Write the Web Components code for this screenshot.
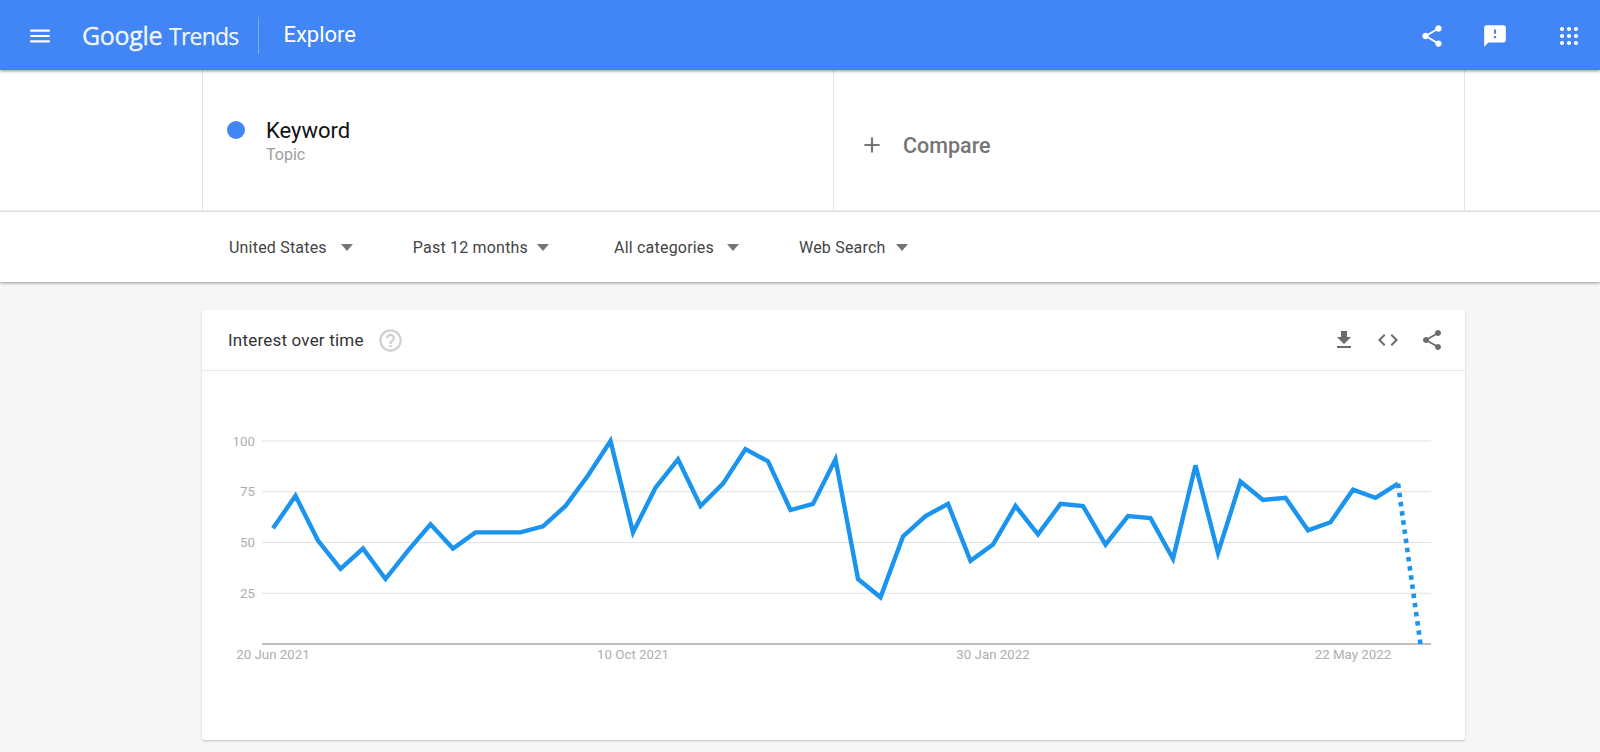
<!DOCTYPE html>
<html>
<head>
<meta charset="utf-8">
<title>Google Trends</title>
<style>
  html, body { margin: 0; height: 100%; }
  body {
    background-color: #f6f6f6;
    font-family: Roboto, "Liberation Sans", sans-serif;
    overflow: hidden;
  }
</style>
</head>
<body>
<trends-header></trends-header>
<search-row></search-row>
<filter-bar></filter-bar>
<chart-card></chart-card>

<script>
const ICONS = {
  menu: 'M3 18h18v-2H3v2zm0-5h18v-2H3v2zm0-7v2h18V6H3z',
  share: 'M18 16.08c-.76 0-1.44.3-1.96.77L8.91 12.7c.05-.23.09-.46.09-.7s-.04-.47-.09-.7l7.05-4.11c.54.5 1.25.81 2.04.81 1.66 0 3-1.34 3-3s-1.34-3-3-3-3 1.34-3 3c0 .24.04.47.09.7L8.04 9.81C7.5 9.31 6.79 9 6 9c-1.66 0-3 1.34-3 3s1.34 3 3 3c.79 0 1.5-.31 2.04-.81l7.12 4.16c-.05.21-.08.43-.08.65 0 1.61 1.31 2.92 2.92 2.92 1.61 0 2.92-1.31 2.92-2.92s-1.31-2.92-2.92-2.92z',
  feedback: 'M20 2H4c-1.1 0-1.99.9-1.99 2L2 22l4-4h14c1.1 0 2-.9 2-2V4c0-1.1-.9-2-2-2zm-7 12h-2v-2h2v2zm0-4h-2V6h2v4z',
  download: 'M19 9h-4V3H9v6H5l7 7 7-7zM5 18v2h14v-2H5z',
  code: 'M9.4 16.6L4.8 12l4.6-4.6L8 6l-6 6 6 6 1.4-1.4zm5.2 0l4.6-4.6-4.6-4.6L16 6l6 6-6 6-1.4-1.4z',
  help: 'M11 18h2v-2h-2v2zm1-16C6.48 2 2 6.48 2 12s4.48 10 10 10 10-4.48 10-10S17.52 2 12 2zm0 18c-4.41 0-8-3.59-8-8s3.59-8 8-8 8 3.59 8 8-3.59 8-8 8zm0-14c-2.21 0-4 1.79-4 4h2c0-1.1.9-2 2-2s2 .9 2 2c0 2-3 1.75-3 5h2c0-2.25 3-2.5 3-5 0-2.21-1.79-4-4-4z',
  plus: 'M19 13h-6v6h-2v-6H5v-2h6V5h2v6h6v2z'
}

class MatIcon extends HTMLElement {
  connectedCallback () {
    const size = this.getAttribute('size') || 24
    const shadow = this.attachShadow({ mode: 'open' })
    shadow.innerHTML = `
      <style>
        :host { display: block; width: ${size}px; height: ${size}px; color: inherit; }
        svg { display: block; width: 100%; height: 100%; fill: currentColor; }
      </style>
      <svg viewBox="0 0 24 24"><path d="${ICONS[this.getAttribute('name')]}"/></svg>`
  }
}

class TrendsHeader extends HTMLElement {
  connectedCallback () {
    const dots = []
    for (const x of [5, 12, 19]) for (const y of [5, 12, 19]) dots.push(`<circle cx="${x}" cy="${y}" r="2.1"/>`)
    this.attachShadow({ mode: 'open' }).innerHTML = `
      <style>
        :host {
          display: flex;
          align-items: center;
          position: relative;
          z-index: 3;
          height: 70px;
          padding: 0 19px 0 27px;
          background-color: #4285f4;
          color: #fff;
          box-shadow: 0 1px 3px rgba(0, 0, 0, .45);
        }
        mat-icon[name="menu"] { margin-top: 2px; }
        .logo {
          display: flex;
          align-items: baseline;
          gap: 7px;
          margin-left: 29px;
          font-family: "Open Sans", sans-serif;
          color: rgba(255, 255, 255, .92);
        }
        .logo b { font-weight: 400; font-size: 25px; letter-spacing: -.35px; -webkit-text-stroke: .4px rgba(255, 255, 255, .92); }
        .logo span { font-weight: 400; font-size: 23px; letter-spacing: -.8px; -webkit-text-stroke: .25px rgba(255, 255, 255, .92); }
        .sep { width: 1px; height: 37px; margin: 0 24px 0 20px; background-color: rgba(255, 255, 255, .3); }
        .title { font-size: 22px; font-weight: 400; margin-top: -1px; }
        .actions { display: flex; align-items: center; gap: 37px; margin-left: auto; padding-top: 1px; }
        .apps { width: 24px; height: 24px; fill: #fff; margin-left: 12px; }
      </style>
      <mat-icon name="menu" size="26"></mat-icon>
      <div class="logo"><b>Google</b><span>Trends</span></div>
      <div class="sep"></div>
      <div class="title">Explore</div>
      <div class="actions">
        <mat-icon name="share" size="26"></mat-icon>
        <mat-icon name="feedback" size="26"></mat-icon>
        <svg class="apps" viewBox="0 0 24 24">${dots.join('')}</svg>
      </div>`
  }
}

class SearchRow extends HTMLElement {
  connectedCallback () {
    this.attachShadow({ mode: 'open' }).innerHTML = `
      <style>
        :host {
          display: grid;
          grid-template-columns: 631px 632px;
          height: 140px;
          padding-left: 202px;
          background-color: #fff;
          border-bottom: 2px solid #eee;
        }
        .cell { border-left: 1px solid #e4e4e4; }
        .cell:last-child { border-right: 1px solid #e4e4e4; }
        .term { display: flex; gap: 21px; padding: 48px 0 0 24px; }
        .dot { width: 18px; height: 18px; margin-top: 3px; border-radius: 50%; background-color: #4285f4; }
        .name { font-size: 22px; line-height: 25px; color: #111; }
        .type { font-size: 16px; line-height: 24px; color: #9e9e9e; }
        .compare { display: flex; align-items: center; gap: 18px; padding: 10px 0 0 17px; color: #757575; }
        .compare mat-icon { margin-left: 8px; margin-top: -1px; }
        .compare span { font-size: 21.5px; font-weight: 500; }
      </style>
      <div class="cell term">
        <div class="dot"></div>
        <div>
          <div class="name">Keyword</div>
          <div class="type">Topic</div>
        </div>
      </div>
      <div class="cell compare">
        <mat-icon name="plus" size="26"></mat-icon>
        <span>Compare</span>
      </div>`
  }
}

class FilterItem extends HTMLElement {
  connectedCallback () {
    this.attachShadow({ mode: 'open' }).innerHTML = `
      <style>
        :host { display: flex; align-items: center; gap: var(--arrow-gap, 14px); font-size: 16px; color: #444; letter-spacing: .2px; }
        i { width: 0; height: 0; border: 6.5px solid transparent; border-top: 7px solid #757575; border-bottom: 0; }
      </style>
      <slot></slot><i></i>`
  }
}

class FilterBar extends HTMLElement {
  connectedCallback () {
    this.attachShadow({ mode: 'open' }).innerHTML = `
      <style>
        :host {
          display: flex;
          align-items: center;
          position: relative;
          z-index: 2;
          height: 70px;
          padding-left: 229px;
          background-color: #fff;
          box-shadow: 0 1px 3px rgba(0, 0, 0, .4);
        }
        filter-item:nth-of-type(1) { margin-right: 60px; }
        filter-item:nth-of-type(2) { margin-right: 65px; --arrow-gap: 9px; }
        filter-item:nth-of-type(3) { margin-right: 60px; --arrow-gap: 13px; }
        filter-item:nth-of-type(4) { --arrow-gap: 10px; }
      </style>
      <filter-item>United States</filter-item>
      <filter-item>Past 12 months</filter-item>
      <filter-item>All categories</filter-item>
      <filter-item>Web Search</filter-item>`
  }
}

class TrendChart extends HTMLElement {
  connectedCallback () {
    const values = [57, 73, 51, 37, 47, 32, 46, 59, 47, 55, 55, 55, 58, 68, 83, 100, 55, 77, 91, 68, 79, 96, 90, 66, 69, 91, 32, 23, 53, 63, 69, 41, 49, 68, 54, 69, 68, 49, 63, 62, 42, 88, 45, 80, 71, 72, 56, 60, 76, 72, 79, 0]
    // svg starts at x=202, y=370 on the page
    const px = i => 71 + i * 22.5
    const py = v => 273 - v * 2.03
    const points = values.map((v, i) => `${px(i).toFixed(1)},${py(v).toFixed(1)}`)
    const solid = points.slice(0, -1).join(' ')
    const dotted = points.slice(-2).join(' ')
    const grid = [100, 75, 50, 25].map(v => `
      <line x1="60" x2="1229" y1="${py(v)}" y2="${py(v)}" stroke="#e2e2e2" stroke-width="1.2"/>
      <text x="53" y="${py(v) + 4.5}" text-anchor="end">${v}</text>`).join('')
    const dates = [[71, '20 Jun 2021'], [431, '10 Oct 2021'], [791, '30 Jan 2022'], [1151, '22 May 2022']]
      .map(d => `<text x="${d[0]}" y="288" text-anchor="middle">${d[1]}</text>`).join('')
    this.attachShadow({ mode: 'open' }).innerHTML = `
      <style>
        :host { display: block; height: 369px; }
        svg { display: block; width: 100%; height: 100%; }
        text { font-family: Roboto, sans-serif; font-size: 13.3px; fill: #aeaeae; }
      </style>
      <svg viewBox="0 0 1263 369">
        ${grid}
        <line x1="60" x2="1229" y1="273" y2="273" stroke="#aaa" stroke-width="1.4"/>
        <polyline points="${solid}" fill="none" stroke="#1a94ef" stroke-width="4.4"/>
        <polyline points="${dotted}" fill="none" stroke="#1a94ef" stroke-width="4.6" stroke-dasharray="4.5 4.76"/>
        ${dates}
      </svg>`
  }
}

class ChartCard extends HTMLElement {
  connectedCallback () {
    this.attachShadow({ mode: 'open' }).innerHTML = `
      <style>
        :host {
          display: block;
          width: 1263px;
          margin: 28px 0 0 202px;
          background-color: #fff;
          border-radius: 2px;
          box-shadow: 0 1px 2px rgba(0, 0, 0, .22);
        }
        header {
          display: flex;
          align-items: center;
          height: 60px;
          padding: 0 21px 0 26px;
          border-bottom: 1px solid #e8e8e8;
        }
        h2 { margin: 0; font-size: 17px; font-weight: 400; color: #333; letter-spacing: .2px; }
        .help { margin-left: 13px; color: #cfcfcf; }
        .tools { display: flex; align-items: center; gap: 20px; margin-left: auto; color: #6b6b6b; }
      </style>
      <header>
        <h2>Interest over time</h2>
        <mat-icon class="help" name="help" size="27"></mat-icon>
        <div class="tools">
          <mat-icon name="download"></mat-icon>
          <mat-icon name="code"></mat-icon>
          <mat-icon name="share"></mat-icon>
        </div>
      </header>
      <trend-chart></trend-chart>`
  }
}

customElements.define('mat-icon', MatIcon)
customElements.define('trends-header', TrendsHeader)
customElements.define('search-row', SearchRow)
customElements.define('filter-item', FilterItem)
customElements.define('filter-bar', FilterBar)
customElements.define('trend-chart', TrendChart)
customElements.define('chart-card', ChartCard)
</script>
</body>
</html>
